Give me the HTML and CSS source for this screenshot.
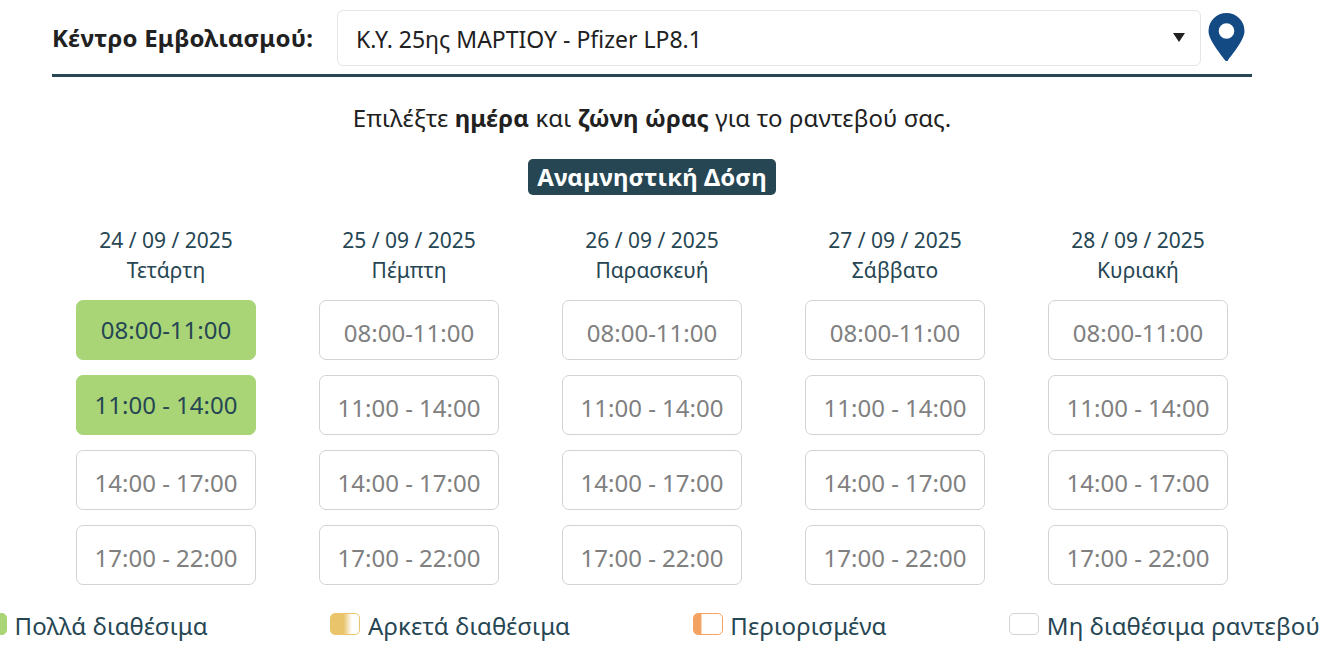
FILE: index.html
```html
<!DOCTYPE html>
<html lang="el">
<head>
    <meta charset="UTF-8">
    <meta name="viewport" content="width=device-width, initial-scale=1.0">
    <title>Ραντεβού Εμβολιασμού</title>
    <link rel="stylesheet" href="styles.css">
</head>
<body>
    <main class="booking">
        <div class="center-row">
            <span class="center-label" id="center-label">Κέντρο Εμβολιασμού:</span>
            <div class="center-select" role="combobox" aria-labelledby="center-label" aria-expanded="false" tabindex="0">
                <span class="center-name">Κ.Υ. 25ης ΜΑΡΤΙΟΥ - Pfizer LP8.1</span>
                <svg class="arrow" viewBox="0 0 12 9"><path d="M0 0h12L6 9z"/></svg>
            </div>
            <svg class="pin" viewBox="0 0 37 48"><path d="M17 47.3C12 40 .5 27 .5 18a18 18 0 0 1 36 0c0 9-11.500 22-16.500 29.300a1.900 1.900 0 0 1-3 0zM18.500 25.800a7.800 7.800 0 1 0 0-15.600 7.800 7.800 0 0 0 0 15.600z"/></svg>
        </div>

        <p class="intro">Επιλέξτε <b>ημέρα</b> και <b>ζώνη ώρας</b> για το ραντεβού σας.</p>
        <h2 class="dose">Αναμνηστική Δόση</h2>

        <div class="days">
            <section class="day">
                <h3>24 / 09 / 2025<br>Τετάρτη</h3>
                <button class="slot many">08:00-11:00</button>
                <button class="slot many">11:00 - 14:00</button>
                <button class="slot" disabled>14:00 - 17:00</button>
                <button class="slot" disabled>17:00 - 22:00</button>
            </section>
            <section class="day">
                <h3>25 / 09 / 2025<br>Πέμπτη</h3>
                <button class="slot" disabled>08:00-11:00</button>
                <button class="slot" disabled>11:00 - 14:00</button>
                <button class="slot" disabled>14:00 - 17:00</button>
                <button class="slot" disabled>17:00 - 22:00</button>
            </section>
            <section class="day">
                <h3>26 / 09 / 2025<br>Παρασκευή</h3>
                <button class="slot" disabled>08:00-11:00</button>
                <button class="slot" disabled>11:00 - 14:00</button>
                <button class="slot" disabled>14:00 - 17:00</button>
                <button class="slot" disabled>17:00 - 22:00</button>
            </section>
            <section class="day">
                <h3>27 / 09 / 2025<br>Σάββατο</h3>
                <button class="slot" disabled>08:00-11:00</button>
                <button class="slot" disabled>11:00 - 14:00</button>
                <button class="slot" disabled>14:00 - 17:00</button>
                <button class="slot" disabled>17:00 - 22:00</button>
            </section>
            <section class="day">
                <h3>28 / 09 / 2025<br>Κυριακή</h3>
                <button class="slot" disabled>08:00-11:00</button>
                <button class="slot" disabled>11:00 - 14:00</button>
                <button class="slot" disabled>14:00 - 17:00</button>
                <button class="slot" disabled>17:00 - 22:00</button>
            </section>
        </div>
    </main>

    <ul class="legend">
        <li><span class="swatch swatch-many"></span>Πολλά διαθέσιμα</li>
        <li><span class="swatch swatch-several"></span>Αρκετά διαθέσιμα</li>
        <li><span class="swatch swatch-limited"></span>Περιορισμένα</li>
        <li><span class="swatch"></span>Μη διαθέσιμα ραντεβού</li>
    </ul>
</body>
</html>
```
FILE: styles.css
```css
:root {
    --text-color: #212121;
    --dark: #264653;
    --many: #a9d577;
    --several: #e9c46a;
    --limited: #f4a261;
    --border-color: #d3d3d3;
}

* {
    margin: 0;
    padding: 0;
    box-sizing: border-box;
}

body {
    background: #fff;
    color: var(--text-color);
    font-family: 'Noto Sans', sans-serif;
    font-size: 24px;
    line-height: 36px;
    overflow: hidden;
}

.booking {
    width: 1200px;
    margin-left: 52px;
}

.center-row {
    display: flex;
    align-items: center;
    height: 77px;
    padding-top: 2px;
    border-bottom: 3px solid var(--dark);
}

.center-label {
    width: 285px;
    font-weight: 700;
    letter-spacing: 0.22px;
}

.center-select {
    display: flex;
    align-items: center;
    justify-content: space-between;
    width: 864px;
    height: 56px;
    padding: 1px 15px 0 18px;
    border: 1px solid #e4e5e7;
    border-radius: 6px;
    font-size: 23px;
}

.arrow {
    width: 12px;
    height: 9px;
    margin-bottom: 3px;
    fill: var(--text-color);
}

.pin {
    width: 37px;
    height: 48px;
    margin: 0 0 2px 7px;
    fill: #144a84;
}

.intro {
    margin-top: 23px;
    letter-spacing: 0.09px;
    text-align: center;
}

.dose {
    width: 248px;
    height: 36px;
    margin: 23px auto 0;
    border-radius: 5px;
    background: var(--dark);
    color: #fff;
    font-size: 24px;
    font-weight: 700;
    letter-spacing: 0.1px;
    text-align: center;
    white-space: nowrap;
}

.days {
    display: grid;
    grid-template-columns: repeat(5, 180px);
    gap: 63px;
    margin: 30px 0 0 24px;
}

.day {
    display: flex;
    flex-direction: column;
    gap: 15px;
}

.day h3 {
    height: 60px;
    color: var(--dark);
    font-size: 21px;
    font-weight: 400;
    line-height: 30px;
    text-align: center;
}

.slot {
    height: 60px;
    padding-top: 6px;
    border: 1px solid var(--border-color);
    border-radius: 7px;
    background: #fff;
    color: #808080;
    font: inherit;
}

.slot.many {
    padding-top: 0;
    border-color: var(--many);
    background: var(--many);
    color: var(--dark);
}

.legend {
    display: flex;
    justify-content: space-between;
    width: 1343px;
    margin: 23px 0 0 -23px;
    color: var(--dark);
    letter-spacing: 0.13px;
    list-style: none;
    white-space: nowrap;
}

.legend li {
    display: flex;
    gap: 7.6px;
}

.swatch {
    width: 30px;
    height: 22px;
    margin-top: 5px;
    border: 1px solid var(--border-color);
    border-radius: 5px;
}

.swatch-many {
    border-color: var(--many);
    background: var(--many);
}

.swatch-several {
    border-color: var(--several);
    background: linear-gradient(to right, var(--several) 45%, #fff 75%);
}

.swatch-limited {
    border-color: var(--limited);
    background: linear-gradient(to right, var(--limited) 23%, #fff 30%);
}
```
